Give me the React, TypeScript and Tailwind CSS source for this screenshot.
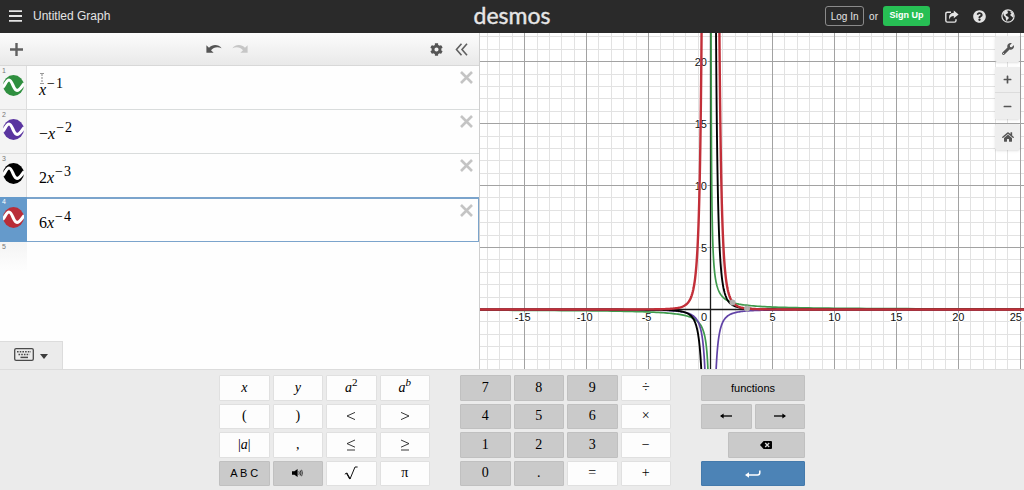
import React from "react";
import { FaCog, FaHome, FaMinus, FaPlus, FaQuestionCircle, FaWrench } from "react-icons/fa";

const ORIGIN_X = 230.5;
const ORIGIN_Y = 276.5;
const UNIT = 12.39;

const px = (x: number) => ORIGIN_X + x * UNIT;
const py = (y: number) => ORIGIN_Y - y * UNIT;

function branch(coef: number, power: number, sign: 1 | -1): string {
  const start = Math.pow(Math.abs(coef) / 26, 1 / power);
  const steps = 160;
  const points: string[] = [];
  for (let i = 0; i <= steps; i++) {
    const x = sign * start * Math.pow(60 / start, i / steps);
    const y = coef / Math.pow(x, power);
    points.push(`${px(x).toFixed(2)} ${py(y).toFixed(2)}`);
  }
  return "M" + points.join("L");
}

const curves = [
  { coef: 1, power: 1, color: "#3f9a4d", width: 1.7 },
  { coef: -1, power: 2, color: "#6042a6", width: 1.7 },
  { coef: 2, power: 3, color: "#000000", width: 1.9 },
  { coef: 6, power: 4, color: "#c22f39", width: 2.4 },
];

const range = (from: number, to: number) => Array.from({ length: to - from + 1 }, (_, i) => from + i);

function Graph() {
  const cols = range(-60, 70);
  const rows = range(-40, 60);
  return (
    <svg
      className="block h-full w-full bg-white"
      viewBox="0 0 544 336"
      preserveAspectRatio="xMidYMid slice"
      role="img"
      aria-label="Graph of four power functions"
    >
      {cols.map((c) => (
        <line key={c} x1={Math.floor(px(c)) + 0.5} x2={Math.floor(px(c)) + 0.5} y1={-400} y2={800}
          stroke="#e2e2e2" strokeWidth={1} />
      ))}
      {rows.map((r) => (
        <line key={r} y1={Math.floor(py(r)) + 0.5} y2={Math.floor(py(r)) + 0.5} x1={-600} x2={1200}
          stroke={r % 5 === 0 ? "#a2a2a2" : "#e2e2e2"} strokeWidth={1} />
      ))}
      {cols.filter((c) => c % 5 === 0).map((c) => (
        <line key={c} x1={Math.floor(px(c)) + 0.5} x2={Math.floor(px(c)) + 0.5} y1={-400} y2={800} stroke="#a2a2a2" />
      ))}
      <path d="M230.5 -400V800M-600 276.5H1200" stroke="#1a1a1a" strokeWidth={1.3} />
      <g className="font-['Liberation_Sans',sans-serif] text-[11px]" fill="#111" stroke="#fff" strokeWidth={2} paintOrder="stroke" strokeLinejoin="round">
        {[-15, -10, -5, 5, 10, 15, 20].map((v) => (
          <text key={v} x={px(v) - (v < 0 ? 2 : 0)} y={288} textAnchor="middle">{v}</text>
        ))}
        <text x={542} y={288} textAnchor="end">25</text>
        <text x={227} y={288} textAnchor="end">0</text>
        {[5, 10, 15, 20].map((v) => (
          <text key={v} x={227} y={py(v) + 4} textAnchor="end">{v}</text>
        ))}
      </g>
      {curves.map((c) => (
        <path key={c.color} d={branch(c.coef, c.power, -1) + branch(c.coef, c.power, 1)} fill="none" stroke={c.color} strokeWidth={c.width} />
      ))}
      <circle cx={252.5} cy={269.5} r={3} fill="#b3b0ae" />
      <circle cx={267} cy={275.5} r={3} fill="#b3b0ae" />
    </svg>
  );
}

function CurveIcon({ color }: { color: string }) {
  return (
    <svg viewBox="0 0 21 21" className="size-[21px]" aria-hidden="true">
      <circle cx="10.5" cy="10.5" r="10.4" fill={color} />
      <path d="M-0.2 12.4C2 10.4 3.4 5 6 5C9.4 5 10.4 15.4 14 15.4C17 15.4 18.4 11.6 21.2 8.4" fill="none" stroke="#fff" strokeWidth="3.1" />
    </svg>
  );
}

function CloseIcon() {
  return (
    <svg viewBox="0 0 13 13" className="size-[13px]" aria-hidden="true">
      <path d="M1 1L12 12M12 1L1 12" stroke="#c4c4c4" strokeWidth="2.6" fill="none" />
    </svg>
  );
}

const V = ({ children }: { children: React.ReactNode }) => <i>{children}</i>;

const expressions = [
  { id: 1, color: "#2f8f3f", lead: "", exp: "1" },
  { id: 2, color: "#5a35a0", lead: "−", exp: "2" },
  { id: 3, color: "#000000", lead: "2", exp: "3" },
  { id: 4, color: "#b92d38", lead: "6", exp: "4" },
];

function ExpressionRow({ id, color, lead, exp }: (typeof expressions)[number]) {
  const active = id === 4;
  return (
    <li className={active ? "-mt-px flex h-[45px]" : "flex h-11"}>
      <div className={active
        ? "relative flex w-[27px] justify-center bg-[#659acb] pt-2.5 text-white"
        : "relative flex w-[27px] justify-center border-r border-b border-[#dedede] bg-[#f4f4f4] pt-[9px] text-[#777]"}>
        <span className="absolute top-px left-0.5 text-[7px] leading-[8px]">{id}</span>
        <button type="button" aria-label={`Toggle curve ${id}`} className="h-[21px]"><CurveIcon color={color} /></button>
      </div>
      <div className={active
        ? "flex flex-1 justify-between border-t-2 border-r border-b border-[#7ba4cc] pr-[5px] pl-3"
        : "flex flex-1 justify-between border-b border-[#d9dcdc] pr-1.5 pl-3"}>
        <div role="math" className="relative pt-3.5 font-['Liberation_Serif',serif] text-[16px] leading-[20px] text-black">
          {lead}<V>x</V><sup className="text-[14px]"><span className="mr-px ml-px">−</span>{exp}</sup>
          {id === 1 && (
            <svg viewBox="0 0 6 11" className="absolute top-[7px] left-0 h-[11px] w-[6px]" aria-hidden="true">
              <path d="M1 .5H5M1 10.5H5" stroke="#999" fill="none" />
              <path d="M3 1V10" stroke="#888" strokeDasharray="2 1" fill="none" />
            </svg>
          )}
        </div>
        <button type="button" aria-label={`Delete expression ${id}`} className="h-[22px]"><CloseIcon /></button>
      </div>
    </li>
  );
}

function TopBar() {
  return (
    <header className="grid h-[33px] shrink-0 grid-cols-[1fr_auto_1fr] items-center bg-[#2a2a2a] pr-[9px] pb-px pl-[9px] text-[#e4e4e4]">
      <div className="flex items-center gap-[11px]">
        <button type="button" aria-label="Menu">
          <svg viewBox="0 0 13 12" className="h-3 w-[13px]"><path d="M0 1.2H13M0 6H13M0 10.8H13" stroke="#e4e4e4" strokeWidth="1.8" /></svg>
        </button>
        <h1 className="text-[12px] leading-4">Untitled Graph</h1>
      </div>
      <a href="#" className="pb-0.5 font-['Lato',sans-serif] text-[23px] leading-[28px] text-[#e6e6e6] [-webkit-text-stroke:0.4px_#e6e6e6]">desmos</a>
      <div className="flex items-center justify-end text-[10px]">
        <button type="button" className="h-5 w-[39px] rounded-[3px] border border-[#8a8a8a]">Log In</button>
        <span className="mx-[5px]">or</span>
        <button type="button" className="h-5 w-[47px] rounded-[3px] bg-[#27bf54] text-[9px] font-bold text-white">Sign Up</button>
        <button type="button" aria-label="Share" className="ml-[15px]">
          <svg viewBox="0 0 14 13" className="h-[13px] w-[14px]">
            <path d="M6 2.2H2.4Q.8 2.2 .8 3.8V10.5Q.8 12.1 2.4 12.1H9.4Q11 12.1 11 10.5V9.2" fill="none" stroke="#e4e4e4" strokeWidth="1.4" />
            <path d="M8.8 .6L13.6 4.4L8.8 8.2V6C6.4 6 5.2 6.8 4.4 9.4C3.4 5.4 5.2 2.9 8.8 2.7Z" fill="#e4e4e4" />
          </svg>
        </button>
        <button type="button" aria-label="Help" className="ml-3.5"><FaQuestionCircle className="size-[13px]" /></button>
        <button type="button" aria-label="Language" className="ml-[15px]">
          <svg viewBox="0 0 14 14" className="size-[14px]">
            <circle cx="7" cy="7" r="6.1" fill="none" stroke="#e4e4e4" strokeWidth="1.2" />
            <path d="M2 3.6L4.5 1.4L7 1.6L6.4 2.8L7.2 4L5.4 5L4.4 5.8L5.2 6.8L7.4 8L7.8 9.2L6.4 10.8L5.8 12.4L5 10.4L4.6 8.4L2.8 6.4Z" fill="#e4e4e4" />
            <path d="M9.6 2.2L12 4L12.7 7.4L11.6 8.4L10.6 7.2L9.4 6.6L9.4 5.4L10.6 4.4L9.4 3.4Z" fill="#e4e4e4" />
          </svg>
        </button>
      </div>
    </header>
  );
}

function UndoArrow() {
  return (
    <svg viewBox="0 0 16 10" className="h-2.5 w-4" aria-hidden="true">
      <path d="M.4 1.2V8.8H7.6L5 6.2C7.6 3.2 11.4 2.4 15.6 4.2C12.6 .2 6.6-.2 3 3.8Z" fill="currentColor" />
    </svg>
  );
}

function Toolbar() {
  return (
    <div className="flex h-[33px] items-center border-b border-[#d8d8d8] bg-linear-to-b from-[#fcfcfc] to-[#e9e9e9] pr-[11px] pl-2.5 text-[#555]">
      <button type="button" aria-label="Add item">
        <svg viewBox="0 0 13 13" className="size-[13px]"><path d="M6.5 0V13M0 6.5H13" stroke="#606060" strokeWidth="2.4" /></svg>
      </button>
      <div className="flex flex-1 justify-center gap-2.5 pb-px">
        <button type="button" aria-label="Undo"><UndoArrow /></button>
        <button type="button" aria-label="Redo" className="-scale-x-100 text-[#c6c6c6]"><UndoArrow /></button>
      </div>
      <div className="flex items-center gap-3">
        <button type="button" aria-label="Settings"><FaCog className="size-[13px]" /></button>
        <button type="button" aria-label="Hide list">
          <svg viewBox="0 0 13 13" className="size-[13px]"><path d="M6.5 .8L1.5 6.5L6.5 12.2M12 .8L7 6.5L12 12.2" fill="none" stroke="#606060" strokeWidth="1.6" /></svg>
        </button>
      </div>
    </div>
  );
}

function KeyboardTab() {
  return (
    <button type="button" aria-label="Toggle keypad" className="mt-auto flex h-7 w-[63px] items-center gap-1.5 border-t border-r border-[#dcdcdc] bg-[#ebebeb] pb-0.5 pl-[14px]">
      <svg viewBox="0 0 20 13" className="h-[13px] w-5" aria-hidden="true">
        <rect x=".7" y=".7" width="18.6" height="11.6" rx="1.4" fill="none" stroke="#4a4a4a" strokeWidth="1.3" />
        <path d="M3 3.8H17M4.5 6.5H15.5" stroke="#4a4a4a" strokeWidth="1.5" strokeDasharray="1.6 1.1" />
        <path d="M6.5 9.4H14" stroke="#4a4a4a" strokeWidth="1.5" />
      </svg>
      <svg viewBox="0 0 8 5" className="mt-1 h-[5px] w-2" aria-hidden="true"><path d="M0 0H8L4 5Z" fill="#3c3c3c" /></svg>
    </button>
  );
}

const light = "flex items-center justify-center rounded-[1px] border border-[#e0e0e0] bg-[#fdfdfd]";
const dark = "flex items-center justify-center rounded-[1px] border border-[#c0c0c0] bg-[#cacaca]";

function Key({ shade = light, label, children }: { shade?: string; label?: string; children: React.ReactNode }) {
  return <button type="button" aria-label={label} className={shade}><span>{children}</span></button>;
}

const group = "grid h-[111px] grid-cols-4 grid-rows-4 gap-[3px]";

function Op({ d }: { d: string }) {
  return <svg viewBox="0 0 10 12" className="h-3 w-2.5" aria-hidden="true"><path d={d} fill="none" stroke="#222" strokeWidth=".9" /></svg>;
}

function Keypad() {
  return (
    <section aria-label="Keypad" className="flex shrink-0 justify-center gap-[30px] border-t border-[#dcdcdc] bg-[#ebebeb] pt-[5px] pb-1 font-['Liberation_Serif',serif] text-[14px] leading-4 text-black">
      <div className={`${group} w-[211px]`}>
        <Key><V>x</V></Key>
        <Key><V>y</V></Key>
        <Key><V>a</V><sup className="text-[11px]">2</sup></Key>
        <Key><V>a</V><sup className="text-[11px]"><V>b</V></sup></Key>
        <Key>(</Key>
        <Key>)</Key>
        <Key label="less than"><Op d="M9 2.4L1 6L9 9.6" /></Key>
        <Key label="greater than"><Op d="M1 2.4L9 6L1 9.6" /></Key>
        <Key>|<V>a</V>|</Key>
        <Key>,</Key>
        <Key label="less or equal"><Op d="M9 1L1 4.6L9 8.2M1 11H9" /></Key>
        <Key label="greater or equal"><Op d="M1 1L9 4.6L1 8.2M1 11H9" /></Key>
        <Key shade={dark}><span className="font-['Liberation_Sans',sans-serif] text-[11px]">A B C</span></Key>
        <Key shade={dark} label="Sound">
          <svg viewBox="0 0 11 8" className="h-2 w-[11px]">
            <path d="M0 2.2H2.4L5.6 0V8L2.4 5.8H0Z" fill="#000" />
            <path d="M6.8 2.2Q7.8 4 6.8 5.8M8.2 1.4Q9.6 4 8.2 6.6M9.6 .8Q11.2 4 9.6 7.2" fill="none" stroke="#000" strokeWidth=".7" />
          </svg>
        </Key>
        <Key label="square root">
          <svg viewBox="0 0 14 14" className="size-[14px]"><path d="M.8 8.2L2.6 7L6 13L11 1H13.6" fill="none" stroke="#111" strokeWidth="1" /><path d="M2.6 7L6 13" stroke="#111" strokeWidth="1.5" /></svg>
        </Key>
        <Key>π</Key>
      </div>
      <div className={`${group} w-[211px]`}>
        {["7", "8", "9"].map((n) => <Key key={n} shade={dark}>{n}</Key>)}
        <Key>÷</Key>
        {["4", "5", "6"].map((n) => <Key key={n} shade={dark}>{n}</Key>)}
        <Key>×</Key>
        {["1", "2", "3"].map((n) => <Key key={n} shade={dark}>{n}</Key>)}
        <Key>−</Key>
        <Key shade={dark}>0</Key>
        <Key shade={dark}>.</Key>
        <Key>=</Key>
        <Key>+</Key>
      </div>
      <div className={`${group} w-[104px]`}>
        <button type="button" className={`${dark} col-span-4 font-['Liberation_Sans',sans-serif] text-[11px]`}>functions</button>
        <button type="button" aria-label="Left" className={`${dark} col-span-2`}>
          <svg viewBox="0 0 12 6" className="h-1.5 w-3"><path d="M1 3H12" stroke="#000" strokeWidth="1.3" /><path d="M0 3L3.6 .4V5.6Z" /></svg>
        </button>
        <button type="button" aria-label="Right" className={`${dark} col-span-2`}>
          <svg viewBox="0 0 12 6" className="h-1.5 w-3"><path d="M0 3H11" stroke="#000" strokeWidth="1.3" /><path d="M12 3L8.4 .4V5.6Z" /></svg>
        </button>
        <button type="button" aria-label="Backspace" className={`${dark} col-span-3 col-start-2`}>
          <svg viewBox="0 0 12 8" className="h-2 w-3"><path d="M3.6 0H11Q12 0 12 1V7Q12 8 11 8H3.6L0 4Z" /><path d="M5.2 2L9.2 6M9.2 2L5.2 6" stroke="#d8d8d8" strokeWidth="1.3" /></svg>
        </button>
        <button type="button" aria-label="Enter" className="col-span-4 flex items-center justify-center rounded-[1px] border border-[#447aac] bg-[#4c83b6]">
          <svg viewBox="0 0 16 8" className="mt-0.5 h-2 w-4"><path d="M2 5H12.5Q14.8 5 14.8 2.8V.4" fill="none" stroke="#fff" strokeWidth="1.5" /><path d="M0 5L4 2.2V7.8Z" fill="#fff" /></svg>
        </button>
      </div>
    </section>
  );
}

const tool = "flex h-[26px] w-[25px] items-center justify-center bg-[#eeeeee]";

export default function App() {
  return (
    <div className="flex h-screen flex-col overflow-hidden bg-white font-['Liberation_Sans',sans-serif]">
      <TopBar />
      <main className="flex min-h-0 flex-1">
        <section aria-label="Expressions" className="flex w-[480px] shrink-0 flex-col border-r border-[#cfcfcf] bg-[#fefefe]">
          <Toolbar />
          <ol>
            {expressions.map((e) => <ExpressionRow key={e.id} {...e} />)}
            <li className="flex h-[30px]">
              <div className="w-[27px] bg-linear-to-b from-[#f4f4f4] to-[#fefefe] pt-px pl-0.5 text-[7px] leading-[8px] text-[#777]">5</div>
            </li>
          </ol>
          <KeyboardTab />
        </section>
        <section aria-label="Graph" className="relative min-w-0 flex-1 overflow-hidden">
          <Graph />
          <div className="absolute top-[3px] right-1 flex flex-col gap-[5px] text-[#555]">
            <button type="button" aria-label="Graph settings" className={`${tool} rounded-xs shadow-sm`}><FaWrench className="size-3 -scale-x-100 rotate-90" /></button>
            <div className="flex flex-col divide-y divide-[#dcdcdc] rounded-xs shadow-sm">
              <button type="button" aria-label="Zoom in" className={tool}><FaPlus className="size-[9px]" /></button>
              <button type="button" aria-label="Zoom out" className={tool}><FaMinus className="size-[9px]" /></button>
            </div>
            <button type="button" aria-label="Default view" className={`${tool} rounded-xs shadow-sm`}><FaHome className="size-3" /></button>
          </div>
        </section>
      </main>
      <Keypad />
    </div>
  );
}
